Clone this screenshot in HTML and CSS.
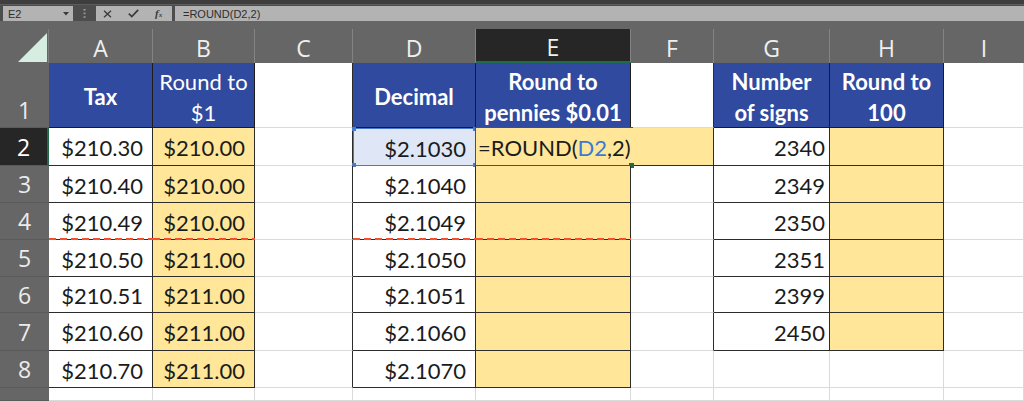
FILE: index.html
```html
<!DOCTYPE html>
<html>
<head>
<meta charset="utf-8">
<link rel="stylesheet" href="styles.css">
</head>
<body>
<div class="fbar">
  <div class="namebox"><span>E2</span>
    <svg class="dd" width="6" height="4" viewBox="0 0 6 4"><polygon points="0,0 6,0 3,3.5" fill="#3a3a3a"/></svg>
  </div>
  <div class="dots"><svg width="3" height="9" viewBox="0 0 3 9"><rect x="0.5" y="0" width="2" height="1.6" fill="#9a9a9a"/><rect x="0.5" y="3.6" width="2" height="1.6" fill="#9a9a9a"/><rect x="0.5" y="7.2" width="2" height="1.6" fill="#9a9a9a"/></svg></div>
  <div class="btns">
    <svg class="ic" width="9" height="8" viewBox="0 0 9 8"><path d="M1 0.8 L8 7.2 M8 0.8 L1 7.2" stroke="#3a3a3a" stroke-width="1.3" fill="none"/></svg>
    <svg class="ic" width="11" height="9" viewBox="0 0 11 9"><path d="M0.8 4.6 L3.8 7.6 L10.2 0.8" stroke="#3a3a3a" stroke-width="1.7" fill="none"/></svg>
    <span class="fx">f<span class="fxs">x</span></span>
  </div>
  <div class="formula">=ROUND(D2,2)</div>
</div>
<div class="strip"></div>
<div class="sheet">
  <!-- column headers -->
  <div class="corner"><svg width="48" height="34" viewBox="0 0 48 34"><polygon points="18,33 47,4 47,33" fill="#d6eee2"/></svg></div>
  <div class="ch">A</div>
  <div class="ch">B</div>
  <div class="ch">C</div>
  <div class="ch">D</div>
  <div class="ch sel">E</div>
  <div class="ch">F</div>
  <div class="ch">G</div>
  <div class="ch">H</div>
  <div class="ch last">I</div>

  <!-- row 1 -->
  <div class="rh rh1">1</div>
  <div class="c h b">Tax</div>
  <div class="c h">Round to<br>$1</div>
  <div class="c edge"></div>
  <div class="c h b">Decimal</div>
  <div class="c h b">Round to<br>pennies $0.01</div>
  <div class="c edge"></div>
  <div class="c h b">Number<br>of signs</div>
  <div class="c h b">Round to<br>100</div>
  <div class="c"></div>

  <!-- row 2 -->
  <div class="rh sel">2</div>
  <div class="c t num">$210.30</div>
  <div class="c t y num">$210.00</div>
  <div class="c edge"></div>
  <div class="c t num dsel">$2.1030<span class="hd h1"></span><span class="hd h2"></span><span class="hd h3"></span><span class="hd h4"></span></div>
  <div class="c t y edit">=ROUND(<span class="ref">D2</span>,2)<span class="hd gh"></span></div>
  <div class="c t num g">2340</div>
  <div class="c t y"></div>
  <div class="c"></div>

  <!-- row 3 -->
  <div class="rh">3</div>
  <div class="c t num">$210.40</div>
  <div class="c t y num">$210.00</div>
  <div class="c edge"></div>
  <div class="c t num">$2.1040</div>
  <div class="c t y"></div>
  <div class="c edge"></div>
  <div class="c t num g">2349</div>
  <div class="c t y"></div>
  <div class="c"></div>

  <!-- row 4 -->
  <div class="rh">4</div>
  <div class="c t num cut">$210.49</div>
  <div class="c t y num cut">$210.00</div>
  <div class="c edge"></div>
  <div class="c t num cut">$2.1049</div>
  <div class="c t y cut"></div>
  <div class="c edge"></div>
  <div class="c t num g">2350</div>
  <div class="c t y"></div>
  <div class="c"></div>

  <!-- row 5 -->
  <div class="rh">5</div>
  <div class="c t num">$210.50</div>
  <div class="c t y num">$211.00</div>
  <div class="c edge"></div>
  <div class="c t num">$2.1050</div>
  <div class="c t y"></div>
  <div class="c edge"></div>
  <div class="c t num g">2351</div>
  <div class="c t y"></div>
  <div class="c"></div>

  <!-- row 6 -->
  <div class="rh">6</div>
  <div class="c t num">$210.51</div>
  <div class="c t y num">$211.00</div>
  <div class="c edge"></div>
  <div class="c t num">$2.1051</div>
  <div class="c t y"></div>
  <div class="c edge"></div>
  <div class="c t num g">2399</div>
  <div class="c t y"></div>
  <div class="c"></div>

  <!-- row 7 -->
  <div class="rh">7</div>
  <div class="c t num">$210.60</div>
  <div class="c t y num">$211.00</div>
  <div class="c edge"></div>
  <div class="c t num">$2.1060</div>
  <div class="c t y"></div>
  <div class="c edge"></div>
  <div class="c t num g">2450</div>
  <div class="c t y"></div>
  <div class="c"></div>

  <!-- row 8 -->
  <div class="rh">8</div>
  <div class="c t num">$210.70</div>
  <div class="c t y num">$211.00</div>
  <div class="c edge"></div>
  <div class="c t num">$2.1070</div>
  <div class="c t y"></div>
  <div class="c"></div>
  <div class="c"></div>
  <div class="c"></div>
  <div class="c"></div>

  <!-- row 9 (partially visible) -->
  <div class="rh"></div>
  <div class="c"></div>
  <div class="c"></div>
  <div class="c"></div>
  <div class="c"></div>
  <div class="c"></div>
  <div class="c"></div>
  <div class="c"></div>
  <div class="c"></div>
  <div class="c"></div>
</div>
</body>
</html>
```
FILE: styles.css
```css
* { box-sizing: border-box; }
body {
  margin: 0;
  width: 1024px;
  height: 401px;
  overflow: hidden;
  background: #ffffff;
  font-family: "Lato", "Liberation Sans", sans-serif;
}

/* formula bar */
.fbar {
  height: 21px;
  display: flex;
  align-items: flex-end;
  background: linear-gradient(#3e3e3e 0 4px, #5c5c5c 4px 5px, #4d4d4d 5px);
  font-family: "Liberation Sans", Arial, sans-serif;
  font-size: 11px;
  color: #2e2e2e;
}
.namebox {
  margin-left: 3px;
  width: 70px;
  height: 15px;
  background: #b3b3b3;
  display: flex;
  align-items: center;
  justify-content: space-between;
  padding: 0 4px 0 5px;
}
.dd { display: block; }
.dots {
  width: 23px;
  height: 15px;
  display: flex;
  align-items: center;
  justify-content: center;
}
.dots svg { display: block; }
.btns {
  width: 76px;
  height: 15px;
  background: #b3b3b3;
  display: flex;
  align-items: center;
  padding-left: 7px;
  gap: 16px;
}
.ic { display: block; }
.fx {
  font-family: "Liberation Serif", serif;
  font-style: italic;
  font-weight: bold;
  font-size: 11px;
  color: #3a3a3a;
  line-height: 1;
}
.fxs { font-size: 7px; }
.formula {
  margin-left: 3px;
  flex: 1;
  height: 15px;
  background: #b3b3b3;
  display: flex;
  align-items: center;
  padding-left: 8px;
}

.strip {
  height: 8px;
  background: #666666;
}

/* sheet grid */
.sheet {
  display: grid;
  grid-template-columns: 49px 104px 102px 98px 123px 155px 83px 116px 114px 80px;
  grid-template-rows: 34px 65px 38px 37px 37px 37px 36px 38px 37px 13px;
}

.corner {
  background: #666666;
  border-right: 1px solid #7e7e7e;
}
.corner svg { display: block; }

.ch {
  background: #666666;
  color: #efefef;
  font-family: "Open Sans", "Noto Sans", sans-serif;
  font-size: 23px;
  display: flex;
  align-items: center;
  justify-content: center;
  border-right: 1px solid #838383;
  padding-top: 4px;
}
.ch.last { border-right: none; }
.ch.sel {
  background: #262626;
  border-bottom: 2px solid #1f6b4a;
}

.rh {
  background: #666666;
  color: #ececec;
  font-family: "Open Sans", "Noto Sans", sans-serif;
  font-size: 23px;
  display: flex;
  align-items: center;
  justify-content: center;
  border-bottom: 1px solid #5a5a5a;
  overflow: hidden;
}
.rh1 {
  align-items: flex-end;
  padding-bottom: 1px;
}
.rh.sel {
  background: #262626;
  color: #ffffff;
  border-right: 2px solid #1f6b4a;
}

.c {
  position: relative;
  border-right: 1px solid #dadada;
  border-bottom: 1px solid #dadada;
  color: #1b1b1b;
  font-size: 22px;
  display: flex;
  align-items: center;
  white-space: nowrap;
}
.edge { border-right-color: #2c2c2c; }

.h {
  background: #2f4a9e;
  color: #ffffff;
  border-right-color: #1c1c1c;
  border-bottom-color: #1c1c1c;
  justify-content: center;
  text-align: center;
  line-height: 31px;
  padding-top: 3px;
}
.b { font-weight: bold; }

.t {
  border-right-color: #2c2c2c;
  border-bottom-color: #2c2c2c;
}
.y { background: #ffe699; }
.num {
  justify-content: flex-end;
  padding-right: 9px;
  padding-top: 2px;
}
.num.g { padding-right: 4px; }

.cut::after {
  content: "";
  position: absolute;
  left: 0;
  right: -1px;
  bottom: -1px;
  height: 2px;
  background: repeating-linear-gradient(90deg, #f4502f 0 7px, transparent 7px 11px);
}

.dsel {
  background: #dfe7f6;
  border: 1px solid #4a78cc;
}
.hd {
  position: absolute;
  width: 4px;
  height: 4px;
  background: #4a78cc;
}
.h1 { left: -2px; top: -2px; }
.h2 { right: -2px; top: -2px; }
.h3 { left: -2px; bottom: -2px; }
.h4 { right: -2px; bottom: -2px; }

.edit {
  grid-column: span 2;
  padding-left: 2px;
  padding-top: 2px;
  border-right-color: #2c2c2c;
}
.edit::before {
  content: "";
  position: absolute;
  left: -1px;
  top: -1px;
  width: 157px;
  bottom: -1px;
  border: 1.5px solid #1e6b44;
  border-right: none;
}
.ref { color: #3b7ad6; }
.gh {
  left: 153px;
  bottom: -3px;
  width: 5px;
  height: 5px;
  background: #1e6b44;
}
```
